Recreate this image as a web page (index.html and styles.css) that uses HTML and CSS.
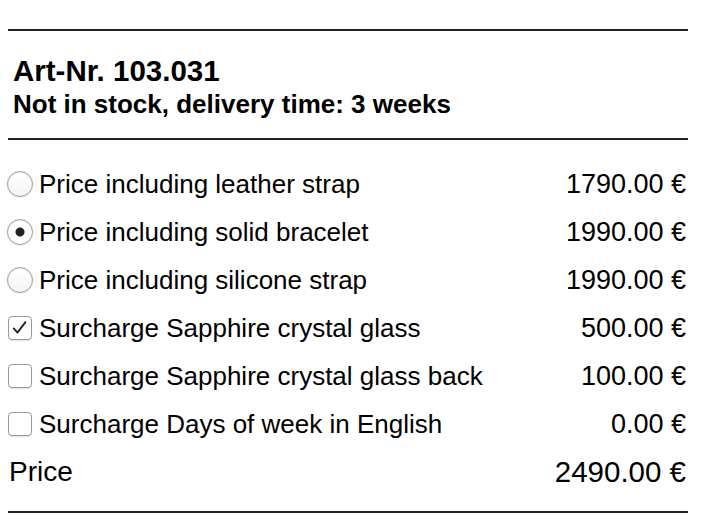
FILE: index.html
```html
<!DOCTYPE html>
<html lang="en">
<head>
  <meta charset="UTF-8" />
  <title>Art-Nr. 103.031</title>
  <link rel="stylesheet" href="styles.css">
</head>
<body>

  <div class="product">
    <div class="head">
      <h2>Art-Nr. 103.031</h2>
      <p>Not in stock, delivery time: 3 weeks</p>
    </div>

    <ul class="options">
      <li>
        <label><span class="radio"></span>Price including leather strap</label>
        <span class="amount">1790.00 €</span>
      </li>
      <li>
        <label><span class="radio checked"></span>Price including solid bracelet</label>
        <span class="amount">1990.00 €</span>
      </li>
      <li>
        <label><span class="radio"></span>Price including silicone strap</label>
        <span class="amount">1990.00 €</span>
      </li>
      <li>
        <label>
          <span class="box">
            <svg viewBox="0 0 24 24" width="24" height="24"><path d="M4.5 12.5 L9 17.5 L18.5 5" fill="none" stroke="#222" stroke-width="2.2" stroke-linecap="round" stroke-linejoin="round" /></svg>
          </span>Surcharge Sapphire crystal glass
        </label>
        <span class="amount">500.00 €</span>
      </li>
      <li>
        <label><span class="box"></span>Surcharge Sapphire crystal glass back</label>
        <span class="amount">100.00 €</span>
      </li>
      <li>
        <label><span class="box"></span>Surcharge Days of week in English</label>
        <span class="amount">0.00 €</span>
      </li>
    </ul>

    <div class="total">
      <span>Price</span>
      <span class="amount">2490.00 €</span>
    </div>
  </div>

</body>
</html>
```

FILE: styles.css
```css
body {
  font-family: 'Liberation Sans', Arial, sans-serif;
  color: #000;
  background: #fff;
  margin: 0;
  padding: 29px 8px 0;
}
.product {
  width: 680px;
  border-top: 2px solid #222;
  border-bottom: 2px solid #222;
}
.head {
  padding: 23px 5px 18px;
  border-bottom: 2px solid #222;
}
.head h2 {
  margin: 0;
  font-size: 29.5px;
  line-height: 34px;
  font-weight: 700;
}
.head p {
  margin: 0;
  font-size: 26px;
  line-height: 32px;
  font-weight: 700;
}
.options {
  list-style: none;
  margin: 20px 0 0;
  padding: 0;
}
.options li {
  display: flex;
  justify-content: space-between;
  align-items: center;
  height: 48px;
  font-size: 26px;
}
.options label {
  display: flex;
  align-items: center;
  gap: 6px;
}
.amount {
  margin-right: 2px;
  font-size: 27px;
}
.radio {
  width: 24px;
  height: 24px;
  border: 1px solid #9c9c9c;
  border-radius: 50%;
  margin-left: -1px;
  background: linear-gradient(#fff, #f4f4f4);
  box-shadow: inset 0 1px 1px rgba(0, 0, 0, 0.08), 0 0.5px 1px rgba(0, 0, 0, 0.15);
}
.radio.checked {
  background: radial-gradient(circle, #222 0 4px, #fff 5px);
}
.box {
  width: 22px;
  height: 22px;
  border: 1px solid #9a9a9a;
  border-radius: 4px;
  margin-right: 1px;
  display: flex;
  align-items: center;
  justify-content: center;
  box-shadow: 0 0.5px 1px rgba(0, 0, 0, 0.12);
}
.box svg {
  width: 20px;
  height: 20px;
}
.total {
  display: flex;
  justify-content: space-between;
  align-items: center;
  height: 48px;
  font-size: 28px;
  padding-left: 1px;
  margin-bottom: 15px;
}
.total .amount {
  font-size: 29.5px;
}
```
